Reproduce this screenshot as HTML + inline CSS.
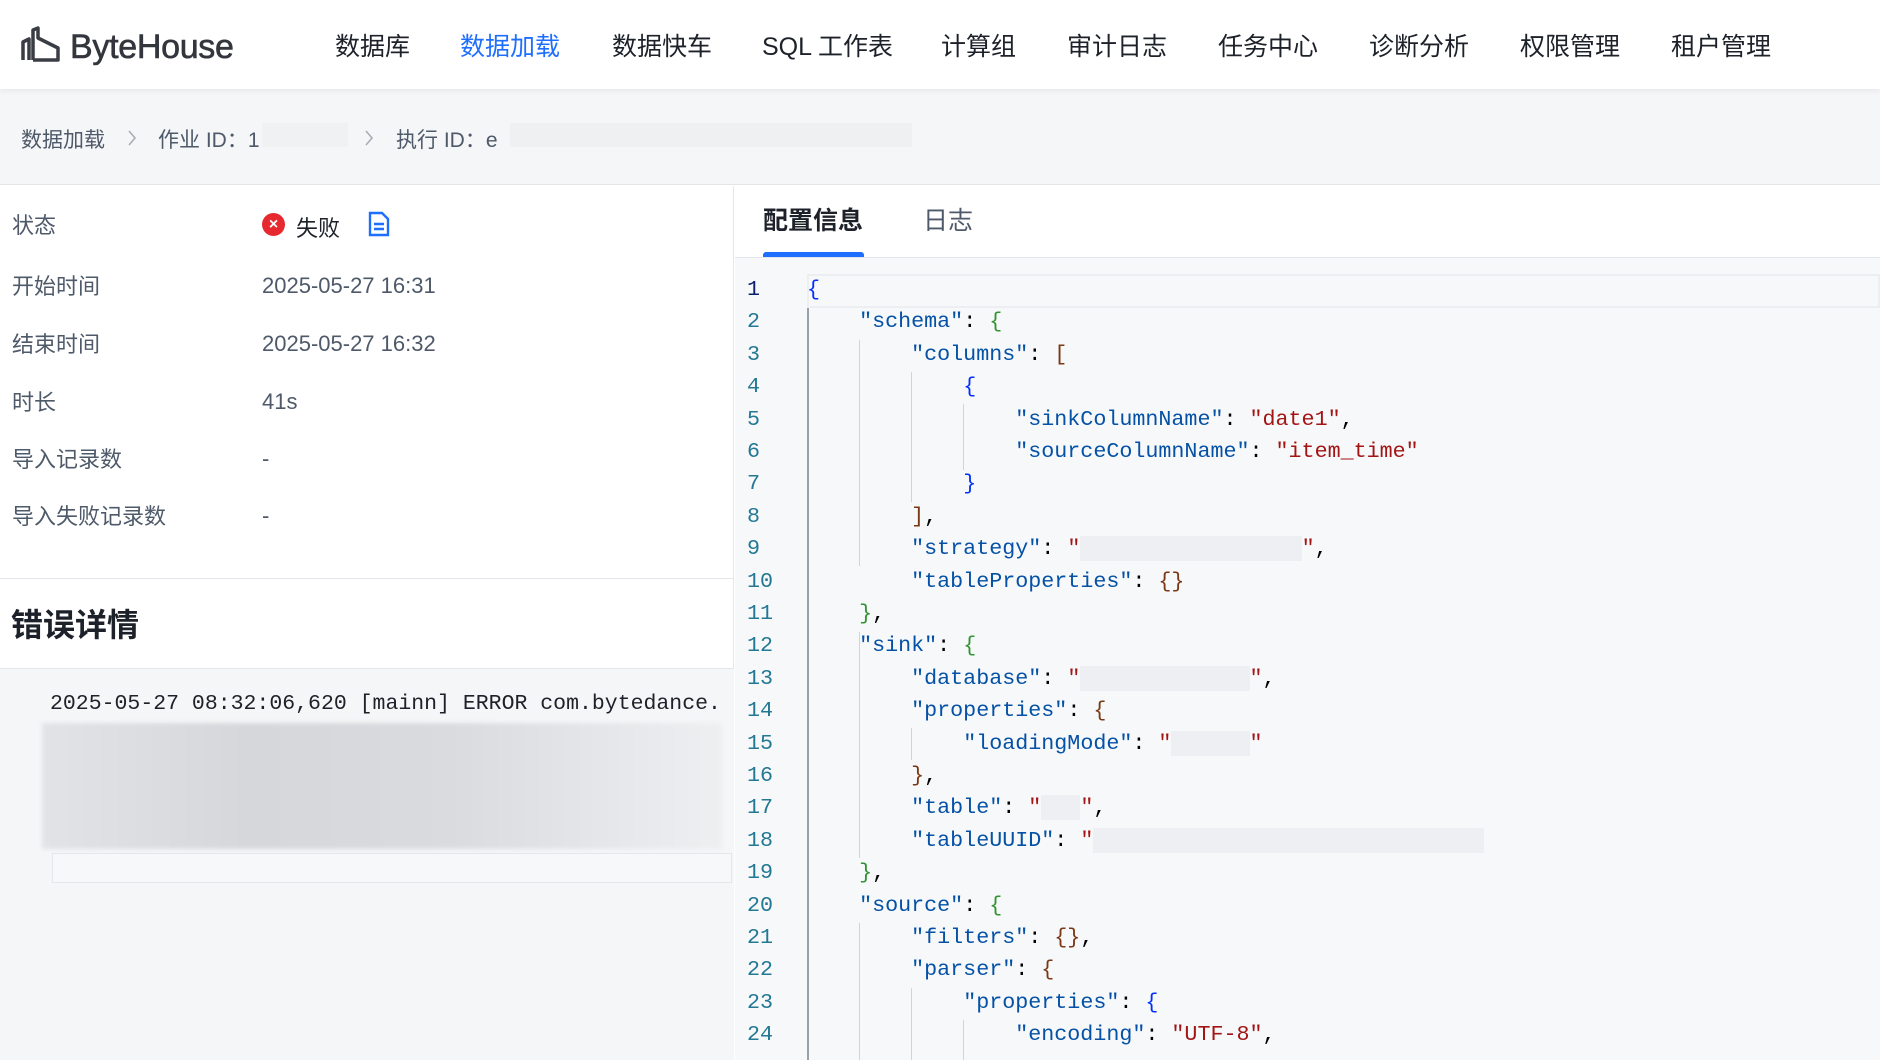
<!DOCTYPE html>
<html><head><meta charset="utf-8"><style>
*{margin:0;padding:0;box-sizing:border-box}
body{width:1880px;height:1060px;overflow:hidden;background:#fff;font-family:"Liberation Sans","Noto Sans CJK SC",sans-serif;color:#1d2129;position:relative}
.hdr{position:absolute;left:0;top:0;width:1880px;height:89px;background:#fff;box-shadow:0 2px 6px rgba(0,0,0,.06);z-index:2}
.logo{position:absolute;left:20px;top:24px;display:flex;align-items:center}
.logo span{font-size:34px;color:#33363c;margin-left:8px;letter-spacing:-0.3px;-webkit-text-stroke:0.6px #33363c;position:relative;top:4px}
.nav{position:absolute;top:27px;font-size:25px;color:#1d2129}
.bc{position:absolute;left:0;top:89px;width:1880px;height:96px;background:#f5f6f8;border-bottom:1px solid #e3e5e8}
.bc div{position:absolute;top:35px;font-size:21px;color:#4e5969}
.chev{position:absolute;top:40px}
.blur{background:#eceef1;position:absolute}
.left{position:absolute;left:0;top:186px;width:734px;height:874px;border-right:1px solid #e5e6eb}
.lbl{position:absolute;left:12px;font-size:22px;color:#4e5969}
.val{position:absolute;left:262px;font-size:22px;color:#4e5969}
.right{position:absolute;left:735px;top:186px;width:1145px;height:874px}
.code{position:absolute;left:735px;top:258px;width:1145px;height:802px;background:#f7f8fa;font-family:"Liberation Mono","DejaVu Sans Mono",monospace;font-size:21.7px;overflow:hidden}
.ln{position:absolute;left:0;width:50px;text-align:left;padding-left:12px;color:#237893;height:32.4px;line-height:32.4px}
.cl{position:absolute;left:72px;white-space:pre;height:32.4px;line-height:32.4px;color:#000}
.k{color:#0451a5}.s{color:#a31515}.b1{color:#0431fa}.b2{color:#319331}.b3{color:#7b3814}
.r{background:#eeeff2;color:transparent}
.g{position:absolute;width:1px;background:#d0d3d8}
</style></head><body>
<div class="hdr">
 <div class="logo">
  <svg width="42" height="36" viewBox="0 0 42 36"><path d="M3 34V16l6-3v21M13 34V4l5-2v10l20 10v12H13" fill="none" stroke="#3a3d44" stroke-width="3.5" stroke-linejoin="round"/></svg>
  <span>ByteHouse</span>
 </div>
 <div class="nav" style="left:335px">数据库</div>
 <div class="nav" style="left:460px;color:#1f6fff">数据加载</div>
 <div class="nav" style="left:612px">数据快车</div>
 <div class="nav" style="left:762px">SQL 工作表</div>
 <div class="nav" style="left:941px">计算组</div>
 <div class="nav" style="left:1067px">审计日志</div>
 <div class="nav" style="left:1218px">任务中心</div>
 <div class="nav" style="left:1369px">诊断分析</div>
 <div class="nav" style="left:1520px">权限管理</div>
 <div class="nav" style="left:1671px">租户管理</div>
</div>
<div class="bc">
 <div style="left:21px">数据加载</div>
 <svg class="chev" style="left:127px" width="10" height="18" viewBox="0 0 10 18"><path d="M2 2l6 7-6 7" fill="none" stroke="#a9adb4" stroke-width="1.6"/></svg>
 <div style="left:158px">作业 ID：1</div>
 <span class="blur" style="left:262px;top:34px;width:86px;height:24px;background:#f0f1f3"></span>
 <svg class="chev" style="left:364px" width="10" height="18" viewBox="0 0 10 18"><path d="M2 2l6 7-6 7" fill="none" stroke="#a9adb4" stroke-width="1.6"/></svg>
 <div style="left:396px">执行 ID：e</div>
 <span class="blur" style="left:510px;top:34px;width:402px;height:24px;background:#eef0f2"></span>
</div>
<div class="left">
 <div class="lbl" style="top:22px">状态</div>
 <div style="position:absolute;left:262px;top:27px;width:23px;height:23px;border-radius:50%;background:#e5292f;color:#fff;font-size:16px;line-height:23px;text-align:center;font-weight:bold">×</div>
 <div class="val" style="left:296px;top:25px;color:#1d2129">失败</div>
 <svg style="position:absolute;left:368px;top:25px" width="22" height="26" viewBox="0 0 22 26"><path d="M2 2h12l6 6v16H2z" fill="none" stroke="#1f6fff" stroke-width="2.4"/><path d="M6 13h10M6 18h10" stroke="#1f6fff" stroke-width="2.4"/></svg>
 <div class="lbl" style="top:83px">开始时间</div><div class="val" style="top:87px">2025-05-27 16:31</div>
 <div class="lbl" style="top:141px">结束时间</div><div class="val" style="top:145px">2025-05-27 16:32</div>
 <div class="lbl" style="top:199px">时长</div><div class="val" style="top:203px">41s</div>
 <div class="lbl" style="top:256px">导入记录数</div><div class="val" style="top:260px">-</div>
 <div class="lbl" style="top:313px">导入失败记录数</div><div class="val" style="top:317px">-</div>
 <div style="position:absolute;left:0;top:392px;width:734px;height:1px;background:#e5e6eb"></div>
 <div style="position:absolute;left:11px;top:414px;font-size:32px;font-weight:bold;color:#1d2129">错误详情</div>
 <div style="position:absolute;left:0;top:482px;width:734px;height:392px;background:#f5f6f8;border-top:1px solid #e5e6eb">
  <div style="position:absolute;left:50px;top:23px;font-family:'Liberation Mono',monospace;font-size:21.5px;white-space:pre;color:#1d2129">2025-05-27 08:32:06,620 [mainn] ERROR com.bytedance.</div>
  <div style="position:absolute;left:42px;top:54px;width:680px;height:126px;background:linear-gradient(90deg,#e2e3e6,#d6d7da 30%,#dadbde 60%,#eeeff1);filter:blur(2px)"></div>
  <div style="position:absolute;left:52px;top:184px;width:680px;height:30px;border:1px solid #e5e6eb;background:#f7f8fa"></div>
 </div>
</div>
<div class="right">
 <div style="position:absolute;left:28px;top:15px;font-size:25px;font-weight:bold;color:#1d2129">配置信息</div>
 <div style="position:absolute;left:188px;top:15px;font-size:25px;color:#4e5969">日志</div>
 <div style="position:absolute;left:28px;top:66px;width:101px;height:5px;background:#1f6fff;border-radius:3px 3px 0 0"></div>
 <div style="position:absolute;left:0;top:71px;width:1145px;height:1px;background:#e5e6eb"></div>
</div>
<div class="code">
 <div style="position:absolute;left:72px;top:16px;right:0;height:34px;border:2px solid #eceef1"></div>
 <div class="g" style="left:72px;top:50px;height:760px;background:#9aa0a8;width:2px"></div>
 <div class="g" style="left:124px;top:82px;height:226px"></div>
 <div class="g" style="left:176px;top:114px;height:130px"></div>
 <div class="g" style="left:228px;top:146px;height:66px"></div>
 <div class="g" style="left:124px;top:374px;height:226px"></div>
 <div class="g" style="left:176px;top:470px;height:32px"></div>
 <div class="g" style="left:124px;top:665px;height:150px"></div>
 <div class="g" style="left:176px;top:730px;height:90px"></div>
 <div class="g" style="left:228px;top:762px;height:60px"></div>
 <div class="ln" style="top:16px;color:#0b216f">1</div><div class="cl" style="top:16px"><span class="b1">{</span></div>
 <div class="ln" style="top:48.4px">2</div><div class="cl" style="top:48.4px">    <span class="k">"schema"</span>: <span class="b2">{</span></div>
 <div class="ln" style="top:80.8px">3</div><div class="cl" style="top:80.8px">        <span class="k">"columns"</span>: <span class="b3">[</span></div>
 <div class="ln" style="top:113.2px">4</div><div class="cl" style="top:113.2px">            <span class="b1">{</span></div>
 <div class="ln" style="top:145.6px">5</div><div class="cl" style="top:145.6px">                <span class="k">"sinkColumnName"</span>: <span class="s">"date1"</span>,</div>
 <div class="ln" style="top:178px">6</div><div class="cl" style="top:178px">                <span class="k">"sourceColumnName"</span>: <span class="s">"item_time"</span></div>
 <div class="ln" style="top:210.4px">7</div><div class="cl" style="top:210.4px">            <span class="b1">}</span></div>
 <div class="ln" style="top:242.8px">8</div><div class="cl" style="top:242.8px">        <span class="b3">]</span>,</div>
 <div class="ln" style="top:275.2px">9</div><div class="cl" style="top:275.2px">        <span class="k">"strategy"</span>: <span class="s">"<span class="r">XXXXXXXXXXXXXXXXX</span>"</span>,</div>
 <div class="ln" style="top:307.6px">10</div><div class="cl" style="top:307.6px">        <span class="k">"tableProperties"</span>: <span class="b3">{}</span></div>
 <div class="ln" style="top:340px">11</div><div class="cl" style="top:340px">    <span class="b2">}</span>,</div>
 <div class="ln" style="top:372.4px">12</div><div class="cl" style="top:372.4px">    <span class="k">"sink"</span>: <span class="b2">{</span></div>
 <div class="ln" style="top:404.8px">13</div><div class="cl" style="top:404.8px">        <span class="k">"database"</span>: <span class="s">"<span class="r">XXXXXXXXXXXXX</span>"</span>,</div>
 <div class="ln" style="top:437.2px">14</div><div class="cl" style="top:437.2px">        <span class="k">"properties"</span>: <span class="b3">{</span></div>
 <div class="ln" style="top:469.6px">15</div><div class="cl" style="top:469.6px">            <span class="k">"loadingMode"</span>: <span class="s">"<span class="r">XXXXXX</span>"</span></div>
 <div class="ln" style="top:502px">16</div><div class="cl" style="top:502px">        <span class="b3">}</span>,</div>
 <div class="ln" style="top:534.4px">17</div><div class="cl" style="top:534.4px">        <span class="k">"table"</span>: <span class="s">"<span class="r">XXX</span>"</span>,</div>
 <div class="ln" style="top:566.8px">18</div><div class="cl" style="top:566.8px">        <span class="k">"tableUUID"</span>: <span class="s">"<span class="r">XXXXXXXXXXXXXXXXXXXXXXXXXXXXXX</span></span></div>
 <div class="ln" style="top:599.2px">19</div><div class="cl" style="top:599.2px">    <span class="b2">}</span>,</div>
 <div class="ln" style="top:631.6px">20</div><div class="cl" style="top:631.6px">    <span class="k">"source"</span>: <span class="b2">{</span></div>
 <div class="ln" style="top:664px">21</div><div class="cl" style="top:664px">        <span class="k">"filters"</span>: <span class="b3">{}</span>,</div>
 <div class="ln" style="top:696.4px">22</div><div class="cl" style="top:696.4px">        <span class="k">"parser"</span>: <span class="b3">{</span></div>
 <div class="ln" style="top:728.8px">23</div><div class="cl" style="top:728.8px">            <span class="k">"properties"</span>: <span class="b1">{</span></div>
 <div class="ln" style="top:761.2px">24</div><div class="cl" style="top:761.2px">                <span class="k">"encoding"</span>: <span class="s">"UTF-8"</span>,</div>
</div>
</body></html>
